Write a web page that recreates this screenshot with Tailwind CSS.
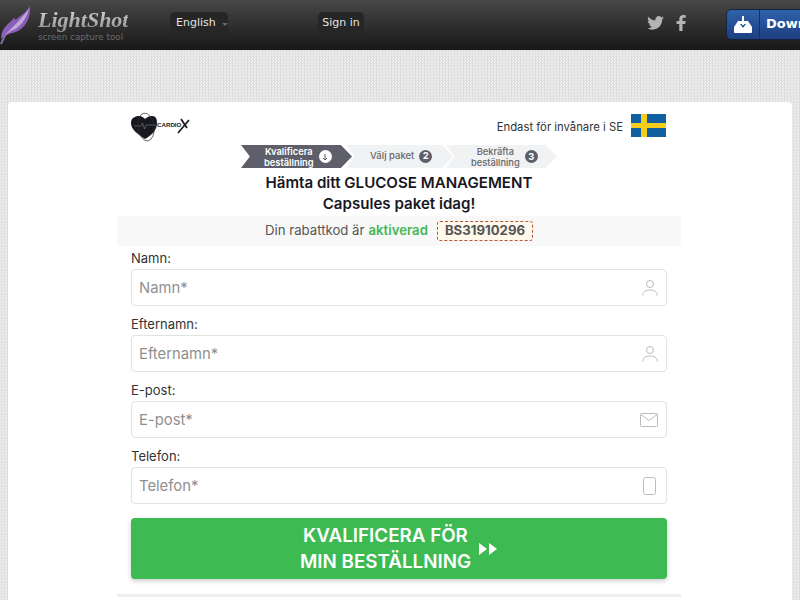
<!DOCTYPE html>
<html lang="sv">
  <head>
    <meta charset="UTF-8">
    <title>LightShot</title>
    <script src="https://cdn.jsdelivr.net/npm/@tailwindcss/browser@4"></script>
  </head>
  <body class="w-[800px] h-[600px] overflow-hidden bg-[#e6e6e6] bg-[image:repeating-conic-gradient(#dedede_0_25%,#eeeeee_0_50%)] bg-[length:3px_3px] font-['Inter',sans-serif]">
    <!-- Top bar -->
    <header class="h-[50px] w-full bg-gradient-to-b from-[#484848] to-[#181818] flex items-center relative overflow-hidden">
      <svg class="absolute left-0 top-[5px]" width="32" height="39" viewBox="0 0 32 39">
        <path d="M0 39 C4 30 8 24 13 19 C8 26 5 32 2 39Z" fill="#8c74a8"/>
        <path d="M1 34 C1 22 10 18 14 13 L16 15 C19 11 25 9 30 1 C31 14 24 26 12 28 C8 29 4 31 1 34Z" fill="#8a5fb8"/>
        <path d="M4 31 C12 23 20 15 29 4 C26 14 20 23 11 26Z" fill="#c3a6dc"/>
      </svg>
      <div class="ml-[38px] w-[95px] shrink-0 flex flex-col">
        <span class="font-['Liberation_Serif',serif] italic font-bold text-[22px] leading-[24px] mt-[-1px] w-fit bg-gradient-to-b from-[#dddddd] to-[#8a8a8a] bg-clip-text text-transparent">LightShot</span>
        <span class="font-['DejaVu_Sans',sans-serif] text-[8.800px] leading-[10px] text-[#6b6b6b] whitespace-nowrap">screen capture tool</span>
      </div>
      <div class="ml-[37px] shrink-0 mt-[-4px] w-[58px] h-[23px] rounded-[5px] bg-[#262626] flex items-center pl-[6px] font-['DejaVu_Sans',sans-serif] text-[11px] text-[#e4e4e4]">
        English<span class="ml-[6px] mt-[2px] w-0 h-0 border-x-[3px] border-x-transparent border-t-[3px] border-t-[#666]"></span>
      </div>
      <div class="ml-[90px] shrink-0 mt-[-4px] w-[46px] h-[23px] rounded-[5px] bg-[#262626] flex items-center justify-center whitespace-nowrap font-['DejaVu_Sans',sans-serif] text-[11px] text-[#e4e4e4]">Sign in</div>
      <svg class="ml-[283px] shrink-0 mt-[-4px]" width="17" height="14" viewBox="0 0 24 20" fill="#b4b4b4">
        <path d="M24 2.4c-.9.4-1.8.7-2.8.8 1-.6 1.800-1.600 2.200-2.700-1 .6-2 1-3.100 1.200A4.900 4.900 0 0 0 11.900 6.200C7.800 6 4.200 4 1.700.9c-1.300 2.200-.7 5.100 1.500 6.600-.8 0-1.600-.2-2.200-.6 0 2.400 1.700 4.400 3.900 4.900-.7.2-1.500.2-2.200.1.600 2 2.400 3.400 4.600 3.400A9.900 9.900 0 0 1 0 17.300 14 14 0 0 0 7.500 19.500c9.100 0 14.300-7.700 14-14.600 1-.7 1.800-1.600 2.500-2.500z"/>
      </svg>
      <svg class="ml-[12px] shrink-0 mt-[-4px]" width="10" height="16" viewBox="0 0 10 16" fill="#b4b4b4">
        <path d="M6.500 16V9h2.700l.4-3H6.500V4.200c0-.9.3-1.400 1.500-1.400h1.700V.2C9.400.1 8.400 0 7.300 0 5 0 3.300 1.500 3.300 4v2H.6v3h2.700v7z"/>
      </svg>
      <div class="ml-[40px] shrink-0 mt-[-2px] w-[120px] h-[31px] rounded-[5px] bg-gradient-to-b from-[#2f62ad] to-[#1d3f7f] border border-[#17233c] flex items-center">
        <div class="w-[33px] h-full shrink-0 border-r border-[#16305f] flex items-center justify-center">
          <svg width="20" height="18" viewBox="0 0 20 18">
            <path d="M5 6h10l4 6v5a1 1 0 0 1-1 1H2a1 1 0 0 1-1-1v-5z" fill="#fff"/>
            <path d="M7 9h6l-3 4z" fill="#2a5aa2"/>
            <path d="M9 1h2v9H9z" fill="#fff"/>
          </svg>
        </div>
        <span class="ml-[6px] font-['DejaVu_Sans',sans-serif] font-bold text-[13px] text-white">Download</span>
      </div>
    </header>

    <!-- Card -->
    <main class="mt-[52px] mx-[8px] h-[498px] overflow-hidden bg-white rounded-t-[4px] px-[109px]">
      <div class="w-[564px]">
        <div class="h-[43px] pl-[14px] pr-[15px] flex items-start justify-between">
          <div class="mt-[10px] flex items-center relative w-[60px] h-[30px]">
            <svg class="absolute left-0 top-0" width="60" height="30" viewBox="0 0 60 30">
              <path d="M14 27C7 22 0 18 0 11 0 6 4 4 8 4c3 0 5 2 6 3 2-2 4-3 7-3 4 0 5 3 5 7 0 7-5 12-12 16z" fill="#17171f"/>
              <path d="M3 14h7l1.500-3 2 6 1.500-4h10" fill="none" stroke="#888" stroke-width=".6"/>
              <ellipse cx="15" cy="15" rx="8" ry="14" fill="none" stroke="#333" stroke-width=".7" transform="rotate(-8 15 15)"/>
              <path d="M58 8L47 21M50 7l6 9" stroke="#222" stroke-width="1.800" fill="none"/>
            </svg>
            <span class="absolute left-[26px] top-[9px] font-['Liberation_Sans',sans-serif] font-bold text-[6.200px] leading-[8px] text-[#222]">CARDIO</span>
          </div>
          <div class="mt-[12px] flex items-start">
            <span class="mt-[6px] text-[11.300px] leading-[14px] text-[#333]">Endast för invånare i SE</span>
            <svg class="ml-[8px]" width="35" height="23" viewBox="0 0 35 23">
              <rect width="35" height="23" fill="#11609f"/>
              <rect x="10" width="6" height="23" fill="#f6cd1c"/>
              <rect y="9" width="35" height="5" fill="#f6cd1c"/>
            </svg>
          </div>
        </div>

        <!-- Steps -->
        <div class="h-[23px] flex pl-[124px]">
          <div class="w-[111px] h-full bg-[#5e5f6a] [clip-path:polygon(0_0,90%_0,100%_50%,90%_100%,0_100%,8%_50%)] flex items-center pl-[23px] text-white font-semibold text-[9.300px] leading-[11px]">
            <span class="text-center">Kvalificera<br>beställning</span>
            <span class="ml-[5px] w-[13px] h-[13px] rounded-full bg-white text-[#5e5f6a] flex items-center justify-center">
              <svg width="8" height="8" viewBox="0 0 8 8" fill="none" stroke="currentColor"><path d="M4 1v6M2 5l2 2 2-2"/></svg>
            </span>
          </div>
          <div class="ml-[-6px] w-[107px] h-full bg-[#f1f2f4] [clip-path:polygon(0_0,90%_0,100%_50%,90%_100%,0_100%,8%_50%)] flex items-center pl-[24px] text-[#666] font-medium text-[9.500px]">
            <span>Välj paket</span>
            <span class="ml-[5px] w-[13px] h-[13px] rounded-full bg-[#5e5f6a] text-white font-bold flex items-center justify-center">2</span>
          </div>
          <div class="ml-[-7px] w-[111px] h-full bg-[#f1f2f4] [clip-path:polygon(0_0,90%_0,100%_50%,90%_100%,0_100%,8%_50%)] flex items-center pl-[25px] text-[#666] font-medium text-[9.300px] leading-[11px]">
            <span class="text-center">Bekräfta<br>beställning</span>
            <span class="ml-[5px] w-[13px] h-[13px] rounded-full bg-[#5e5f6a] text-white font-bold flex items-center justify-center">3</span>
          </div>
        </div>

        <h1 class="mt-[4px] h-[44px] text-center font-semibold text-[15.100px] leading-[21px] text-[#17171f]">Hämta ditt GLUCOSE MANAGEMENT<br>Capsules paket idag!</h1>

        <div class="h-[30px] bg-[#f8f8f8] flex items-center justify-center text-[13.200px] text-[#555]">
          <span>Din rabattkod är</span>
          <span class="ml-[4px] font-semibold text-[#45b756]">aktiverad</span>
          <span class="ml-[9px] px-[7px] h-[20px] rounded-[3px] border border-dashed border-[#b4553f] bg-[#fff9ec] flex items-center font-bold text-[#555]">BS31910296</span>
        </div>

        <form class="px-[14px]">
          <label class="block mt-[4px] h-[19px] text-[13px] leading-[16px] text-[#333]">Namn:</label>
          <div class="h-[37px] rounded-[4px] border border-[#e2e2e2] flex items-center justify-between pl-[7px] pr-[8px] text-[14.800px] text-[#8f8f8f]">
            <span class="mt-[1px]">Namn*</span>
            <svg width="16" height="18" viewBox="0 0 16 18" fill="none" stroke="#bcbcbc"><circle cx="8" cy="5" r="3.500"/><path d="M1 16.500v-1c0-3 3-4.500 7-4.500s7 1.500 7 4.500v1"/></svg>
          </div>
          <label class="block mt-[10px] h-[19px] text-[13px] leading-[16px] text-[#333]">Efternamn:</label>
          <div class="h-[37px] rounded-[4px] border border-[#e2e2e2] flex items-center justify-between pl-[7px] pr-[8px] text-[14.800px] text-[#8f8f8f]">
            <span class="mt-[1px]">Efternamn*</span>
            <svg width="16" height="18" viewBox="0 0 16 18" fill="none" stroke="#bcbcbc"><circle cx="8" cy="5" r="3.500"/><path d="M1 16.500v-1c0-3 3-4.500 7-4.500s7 1.500 7 4.500v1"/></svg>
          </div>
          <label class="block mt-[10px] h-[19px] text-[13px] leading-[16px] text-[#333]">E-post:</label>
          <div class="h-[37px] rounded-[4px] border border-[#e2e2e2] flex items-center justify-between pl-[7px] pr-[8px] text-[14.800px] text-[#8f8f8f]">
            <span class="mt-[1px]">E-post*</span>
            <svg width="18" height="14" viewBox="0 0 18 14" fill="none" stroke="#bcbcbc"><rect x=".5" y=".5" width="17" height="13" rx="1"/><path d="M1 1.500l8 6 8-6"/></svg>
          </div>
          <label class="block mt-[10px] h-[19px] text-[13px] leading-[16px] text-[#333]">Telefon:</label>
          <div class="h-[37px] rounded-[4px] border border-[#e2e2e2] flex items-center justify-between pl-[7px] pr-[10px] text-[14.800px] text-[#8f8f8f]">
            <span class="mt-[1px]">Telefon*</span>
            <svg width="13" height="18" viewBox="0 0 13 18" fill="none" stroke="#bcbcbc"><rect x=".5" y=".5" width="12" height="17" rx="2"/></svg>
          </div>
          <button type="button" class="mt-[14px] w-full h-[61px] rounded-[4px] bg-[#3dbb52] shadow-[0_2px_5px_rgba(0,0,0,0.2)] flex items-center justify-center text-white font-semibold text-[18.800px] leading-[26px]">
            <span class="text-center">KVALIFICERA FÖR<br>MIN BESTÄLLNING</span>
            <svg class="ml-[8px]" width="19" height="12" viewBox="0 0 19 12" fill="#fff"><path d="M0 0l8 6-8 6zM10 0l8 6-8 6z"/></svg>
          </button>
        </form>
        <div class="mt-[15px] h-[3px] bg-[#eeeeee]"></div>
      </div>
    </main>
  </body>
</html>
